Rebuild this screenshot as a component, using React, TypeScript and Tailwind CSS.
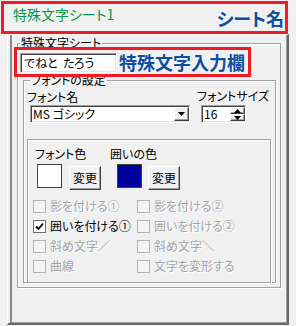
import React from 'react';

const etched = 'border border-[#a0a0a0] shadow-[1px_1px_0_#fff,inset_1px_1px_0_#fff]';
const sunken = 'border-t border-l border-b border-r border-t-[#a0a0a0] border-l-[#a0a0a0] border-b-white border-r-white shadow-[inset_1px_1px_0_#404040,inset_-1px_-1px_0_#e3e3e3]';
const raised = 'border border-t-white border-l-white border-b-[#404040] border-r-[#404040] shadow-[inset_-1px_-1px_0_#a0a0a0]';

const CheckRow = ({ label, checked, disabled }: { label: string; checked?: boolean; disabled?: boolean }) => (
  <div className="flex items-center h-[20px]">
    <span
      className={`w-[13px] h-[13px] flex items-center justify-center border ${
        disabled ? 'border-[#b4b4b4] bg-[#f4f4f4]' : 'border-[#6e6e6e] bg-white'
      }`}
    >
      {checked && (
        <svg width="9" height="9" viewBox="0 0 9 9">
          <path d="M1 4.5 L3.5 7 L8 1.5" stroke="#000" strokeWidth="1.8" fill="none" />
        </svg>
      )}
    </span>
    <span
      className={`ml-[4px] text-[12px] leading-[12px] ${
        disabled ? 'text-[#a3a3a3] [text-shadow:1px_1px_0_#fff]' : 'text-black'
      }`}
    >
      {label}
    </span>
  </div>
);

const ChangeButton = () => (
  <button className={`w-[32px] h-[24px] bg-[#f0f0f0] text-[12px] leading-[12px] text-black ${raised}`}>変更</button>
);

export default function App() {
  return (
    <div className="w-[296px] h-[326px] bg-[#f0f0f0] overflow-hidden font-['Noto_Sans_CJK_JP','Liberation_Sans',sans-serif] [font-feature-settings:'palt']">
      {/* sheet name tab */}
      <div className="ml-[1px] mt-[1px] w-[287px] h-[33px] border-[3px] border-[#ee1c25] flex items-start justify-between pl-[9px] pr-[1px]">
        <span className="mt-[3px] text-[14px] leading-[14px] text-[#00984a]">特殊文字シート1</span>
        <span className="mt-[5px] text-[18px] leading-[18px] font-bold text-[#0b4ea2] [text-shadow:0_0_2px_#fff]">シート名</span>
      </div>

      {/* tab page */}
      <div className="ml-[7px] w-[282px] h-[291px] border-l border-t border-white border-r-2 border-b-2 border-r-[#696969] border-b-[#696969] shadow-[inset_2px_0_0_#f0f0f0,inset_4px_0_0_#8a8a8a,inset_-1px_-1px_0_#a0a0a0] pt-[8px] pl-[9px]">
        <div className={`relative w-[264px] h-[245px] ${etched}`}>
          <span className="absolute -top-[7px] left-[2px] px-[1px] bg-[#f0f0f0] text-[12px] leading-[12px] text-black">特殊文字シート</span>

          {/* input row */}
          <div className="relative z-10 -ml-[4px] mt-[3px] w-[237px] h-[30px] border-[3px] border-[#ee1c25] bg-[#f0f0f0] flex items-start pl-[3px] pt-[3px]">
            <div className={`w-[97px] h-[20px] bg-white flex items-center pl-[3px] text-[12px] leading-[12px] text-black ${sunken}`}>
              でねと&nbsp;&nbsp;たろう
            </div>
            <span className="ml-[2px] -mt-[1px] text-[18px] leading-[20px] font-bold text-[#0b4ea2] [text-shadow:0_0_2px_#fff]">特殊文字入力欄</span>
          </div>

          {/* font settings */}
          <div className={`relative ml-[5px] mt-[3px] w-[253px] h-[203px] ${etched}`}>
            <span className="absolute -top-[7px] left-[6px] px-[1px] bg-[#f0f0f0] text-[12px] leading-[12px] text-black">フォントの設定</span>

            <div className="flex pl-[3px] pt-[10px]">
              <div className="w-[170px]">
                <div className="text-[12px] leading-[12px] text-black">フォント名</div>
                <div className={`mt-[2px] ml-[3px] w-[160px] h-[18px] bg-white flex items-center justify-between ${sunken}`}>
                  <span className="pl-[2px] text-[12px] leading-[12px] text-black">MS ゴシック</span>
                  <span className={`w-[15px] h-[14px] bg-[#f0f0f0] flex items-center justify-center ${raised}`}>
                    <svg width="7" height="4" viewBox="0 0 7 4"><path d="M0 0 H7 L3.5 4 Z" fill="#000" /></svg>
                  </span>
                </div>
              </div>
              <div>
                <div className="-mt-[1px] text-[12px] leading-[12px] text-black">フォントサイズ</div>
                <div className={`mt-[3px] ml-[4px] w-[45px] h-[18px] bg-white flex items-center justify-between ${sunken}`}>
                  <span className="pl-[2px] text-[12px] leading-[12px] text-black">16</span>
                  <span className="flex flex-col w-[15px] h-[14px]">
                    <span className={`flex-1 bg-[#f0f0f0] flex items-center justify-center ${raised}`}>
                      <svg width="7" height="4" viewBox="0 0 7 4"><path d="M0 4 H7 L3.5 0 Z" fill="#000" /></svg>
                    </span>
                    <span className={`flex-1 bg-[#f0f0f0] flex items-center justify-center ${raised}`}>
                      <svg width="7" height="4" viewBox="0 0 7 4"><path d="M0 0 H7 L3.5 4 Z" fill="#000" /></svg>
                    </span>
                  </span>
                </div>
              </div>
            </div>

            {/* colours and effects */}
            <div className={`ml-[3px] mt-[16px] w-[244px] h-[144px] ${etched}`}>
              <div className="flex pl-[7px] pt-[8px]">
                <div className="w-[75px]">
                  <div className="text-[12px] leading-[12px] text-black">フォント色</div>
                  <div className="mt-[4px] flex">
                    <span className="ml-[2px] w-[25px] h-[24px] bg-white border border-[#404040]" />
                    <span className="ml-[7px]"><ChangeButton /></span>
                  </div>
                </div>
                <div>
                  <div className="text-[12px] leading-[12px] text-black">囲いの色</div>
                  <div className="mt-[4px] flex">
                    <span className="ml-[7px] w-[25px] h-[24px] bg-[#00009c] border border-[#404040]" />
                    <span className="ml-[6px]"><ChangeButton /></span>
                  </div>
                </div>
              </div>

              <div className="mt-[6px] pl-[5px] grid grid-cols-[104px_1fr]">
                <CheckRow label="影を付ける①" disabled />
                <CheckRow label="影を付ける②" disabled />
                <CheckRow label="囲いを付ける①" checked />
                <CheckRow label="囲いを付ける②" disabled />
                <CheckRow label="斜め文字／" disabled />
                <CheckRow label="斜め文字＼" disabled />
                <CheckRow label="曲線" disabled />
                <CheckRow label="文字を変形する" disabled />
              </div>
            </div>
          </div>
        </div>
      </div>
    </div>
  );
}
